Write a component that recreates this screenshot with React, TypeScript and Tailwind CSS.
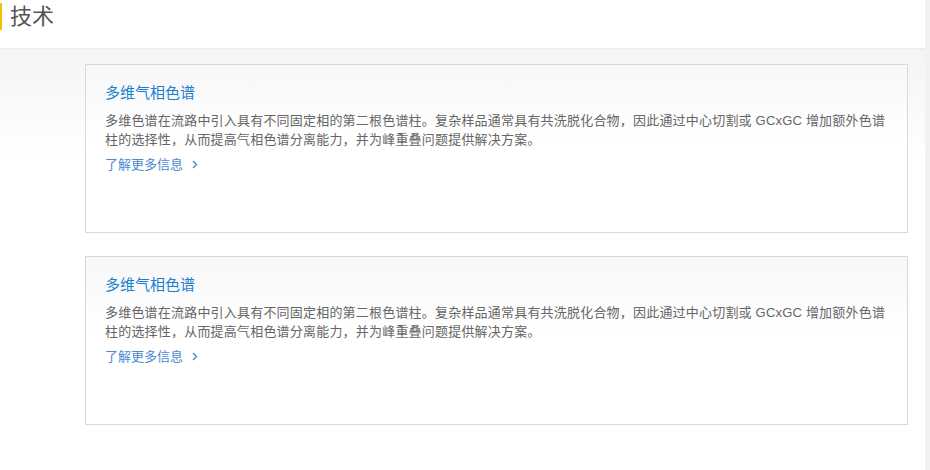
const cards = [
  {
    title: "多维气相色谱",
    body: "多维色谱在流路中引入具有不同固定相的第二根色谱柱。复杂样品通常具有共洗脱化合物，因此通过中心切割或 GCxGC 增加额外色谱柱的选择性，从而提高气相色谱分离能力，并为峰重叠问题提供解决方案。",
  },
  {
    title: "多维气相色谱",
    body: "多维色谱在流路中引入具有不同固定相的第二根色谱柱。复杂样品通常具有共洗脱化合物，因此通过中心切割或 GCxGC 增加额外色谱柱的选择性，从而提高气相色谱分离能力，并为峰重叠问题提供解决方案。",
  },
]

function TechCard({ title, body }: { title: string; body: string }) {
  return (
    <div className="h-[169px] border border-[#d6d9dd] bg-gradient-to-b from-[#f7f7f7] to-white to-[45%] px-[19px] pt-[17px]">
      <h3 className="text-[15px] leading-[22px] text-[#1a7fd4]">{title}</h3>
      <p className="mt-[7px] text-[13px] leading-[19px] tracking-[0.2px] text-[#666]">{body}</p>
      <a href="#" className="mt-[6px] flex items-center gap-[9px] text-[13px] leading-[19px] text-[#4a8ad0]">
        了解更多信息
        <svg width="6" height="9" viewBox="0 0 6 9" fill="none" stroke="#4a8ad0" strokeWidth="1.4">
          <path d="M1 1l3.5 3.5L1 8" />
        </svg>
      </a>
    </div>
  )
}

export default function App() {
  return (
    <div
      className="flex h-[470px] w-[930px] overflow-hidden bg-white"
      style={{ fontFamily: '"Liberation Sans", "Noto Sans CJK SC", sans-serif' }}
    >
      <div className="flex-1">
        {/* Header */}
        <div className="flex h-[49px] items-start border-b border-[#e9ebee] bg-white">
          <div className="mt-[3px] h-[27px] w-[2px] bg-[#f2c200]" />
          <h1 className="ml-[8px] mt-[2px] text-[22px] leading-[30px] text-[#555]">技术</h1>
        </div>

        {/* Content */}
        <div className="bg-gradient-to-b from-[#f4f4f4] to-white to-[110px] pb-10 pl-[85px] pr-[17px] pt-[15px]">
          <div className="flex flex-col gap-[23px]">
            {cards.map((c, i) => (
              <TechCard key={i} title={c.title} body={c.body} />
            ))}
          </div>
        </div>
      </div>
      <div className="w-[5px] bg-[#f2f2f2]" />
    </div>
  )
}
